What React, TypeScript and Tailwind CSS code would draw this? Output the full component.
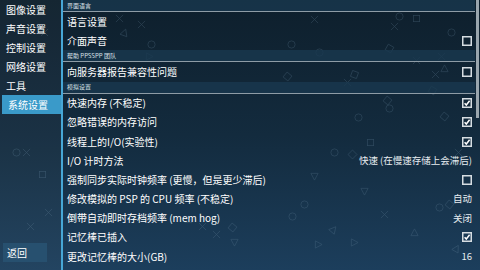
import React from "react";

const FONT = { fontFamily: '"Noto Sans CJK SC", Roboto, "Noto Sans", sans-serif' };

function Check({ on }: { on: boolean }) {
  return (
    <svg width="10" height="10" viewBox="0 0 10 10" className="block">
      <rect x="0.75" y="0.75" width="8.5" height="8.5" fill="none" stroke="#d6dde2" strokeWidth="1.5" />
      {on && <path d="M2.6 5.2 L4.3 7 L7.6 2.8" fill="none" stroke="#ffffff" strokeWidth="1.5" />}
    </svg>
  );
}

type Row = { label: string; check?: boolean; value?: string };

function Header({ text }: { text: string }) {
  return (
    <div className="flex flex-col">
      <div className="h-[11px] bg-[#19384f]/80 flex items-center pl-[4px] text-[6px] leading-none text-[#d8e0e6]">{text}</div>
      <div className="h-px bg-[#8e9ca6]" />
    </div>
  );
}

function Item({ r }: { r: Row }) {
  return (
    <div className="h-[19.2px] flex items-center justify-between pl-[4px] pr-[3px] text-[10px] leading-none text-white">
      <span>{r.label}</span>
      {r.check !== undefined && <Check on={r.check} />}
      {r.value && <span className="text-[9.5px] text-[#e6ecf0]">{r.value}</span>}
    </div>
  );
}

const Sym = ({ t, x, y, s = 9, r = 0 }: { t: string; x: number; y: number; s?: number; r?: number }) => {
  const c = "#6f8ea6";
  let el: React.ReactNode = null;
  if (t === "o") el = <circle cx="5" cy="5" r="4" fill="none" stroke={c} strokeWidth="0.8" />;
  if (t === "x") el = <path d="M1 1 L9 9 M9 1 L1 9" stroke={c} strokeWidth="0.8" />;
  if (t === "s") el = <rect x="1.5" y="1.5" width="7" height="7" fill="none" stroke={c} strokeWidth="0.8" />;
  if (t === "t") el = <path d="M5 1 L9 8.5 L1 8.5 Z" fill="none" stroke={c} strokeWidth="0.8" />;
  return (
    <svg width={s} height={s} viewBox="0 0 10 10" className="absolute" style={{ left: x, top: y, transform: `rotate(${r}deg)`, opacity: 0.3 }}>
      {el}
    </svg>
  );
};

export default function App() {
  const left = ["图像设置", "声音设置", "控制设置", "网络设置", "工具", "系统设置"];
  const sym: { t: string; x: number; y: number; s?: number; r?: number }[] = [
    { t: "x", x: 40, y: 28 }, { t: "o", x: 12, y: 148 }, { t: "x", x: 22, y: 148 }, { t: "s", x: 38, y: 170 },
    { t: "x", x: 44, y: 208 }, { t: "x", x: 26, y: 222 }, { t: "x", x: 115, y: 14 }, { t: "t", x: 120, y: 28, r: 20 },
    { t: "x", x: 137, y: 20 }, { t: "o", x: 147, y: 40 }, { t: "t", x: 145, y: 52, r: 90 }, { t: "x", x: 310, y: 15 },
    { t: "o", x: 395, y: 12 }, { t: "s", x: 412, y: 14 }, { t: "x", x: 390, y: 22 }, { t: "o", x: 447, y: 28 },
    { t: "o", x: 287, y: 40 }, { t: "s", x: 385, y: 44, r: 30 }, { t: "o", x: 315, y: 48 }, { t: "x", x: 412, y: 56 },
    { t: "x", x: 437, y: 52 }, { t: "t", x: 440, y: 64 }, { t: "s", x: 283, y: 72, r: 40 }, { t: "s", x: 350, y: 70, r: 20 },
    { t: "x", x: 343, y: 78 }, { t: "x", x: 431, y: 70 }, { t: "s", x: 428, y: 86, r: 30 }, { t: "o", x: 385, y: 104 },
    { t: "s", x: 383, y: 96, r: 40 }, { t: "s", x: 440, y: 112, r: 40 }, { t: "o", x: 354, y: 113 }, { t: "s", x: 366, y: 138 },
    { t: "o", x: 330, y: 148 }, { t: "s", x: 348, y: 150, r: 45 }, { t: "x", x: 454, y: 148 }, { t: "x", x: 380, y: 210 },
    { t: "o", x: 300, y: 200 }, { t: "o", x: 288, y: 212 }, { t: "o", x: 435, y: 203 }, { t: "s", x: 445, y: 200, r: 40 },
    { t: "t", x: 360, y: 187, r: 180 }, { t: "t", x: 329, y: 225, r: 40 }, { t: "t", x: 314, y: 240, r: 90 }, { t: "t", x: 410, y: 228 },
    { t: "t", x: 230, y: 238, r: 180 }, { t: "t", x: 350, y: 238, r: 90 }, { t: "t", x: 452, y: 244, r: 30 }, { t: "t", x: 184, y: 215 },
    { t: "x", x: 198, y: 222 }, { t: "x", x: 212, y: 230 }, { t: "s", x: 228, y: 223, r: 40 }, { t: "t", x: 310, y: 172, r: 180 },
  ];
  return (
    <div className="w-[480px] h-[270px] relative overflow-hidden bg-gradient-to-b from-[#0e1f2c] via-[#132b3e] to-[#1c3e5c]" style={FONT}>
      <div className="absolute inset-0 pointer-events-none">
        {sym.map((s, i) => (
          <Sym key={i} {...s} />
        ))}
      </div>
      <div className="relative flex h-full">
        <div className="w-[61px] flex flex-col bg-white/[0.03]">
          {left.map((l, i) => (
            <div
              key={l}
              className={`h-[19px] flex items-center pl-[6px] text-[10px] leading-none text-white ${i === 5 ? "ml-[2px] pl-[4px] bg-[#3a9ac9]" : ""}`}
            >
              {l}
            </div>
          ))}
          <div className="flex-1" />
          <div className="ml-[3px] mb-[8px] w-[44px] h-[19px] bg-[#27506f] flex items-center pl-[4px] text-[10px] leading-none text-white">返回</div>
        </div>
        <div className="w-[2px] bg-[#47a7d6]" />
        <div className="flex-1 flex">
          <div className="flex-1 flex flex-col">
            <Header text="界面语言" />
            <Item r={{ label: "语言设置" }} />
            <Item r={{ label: "介面声音", check: false }} />
            <Header text="帮助 PPSSPP 团队" />
            <Item r={{ label: "向服务器报告兼容性问题", check: false }} />
            <Header text="模拟设置" />
            <Item r={{ label: "快速内存 (不稳定)", check: true }} />
            <Item r={{ label: "忽略错误的内存访问", check: true }} />
            <Item r={{ label: "线程上的I/O(实验性)", check: true }} />
            <Item r={{ label: "I/O 计时方法", value: "快速 (在慢速存储上会滞后)" }} />
            <Item r={{ label: "强制同步实际时钟频率 (更慢，但是更少滞后)", check: false }} />
            <Item r={{ label: "修改模拟的 PSP 的 CPU 频率 (不稳定)", value: "自动" }} />
            <Item r={{ label: "倒带自动即时存档频率 (mem hog)", value: "关闭" }} />
            <Item r={{ label: "记忆棒已插入", check: true }} />
            <Item r={{ label: "更改记忆棒的大小(GB)", value: "16" }} />
          </div>
          <div className="w-[5px] flex flex-col">
            <div className="ml-[1px] w-[3px] h-[118px] bg-[#9aa6ae]" />
          </div>
        </div>
      </div>
    </div>
  );
}
